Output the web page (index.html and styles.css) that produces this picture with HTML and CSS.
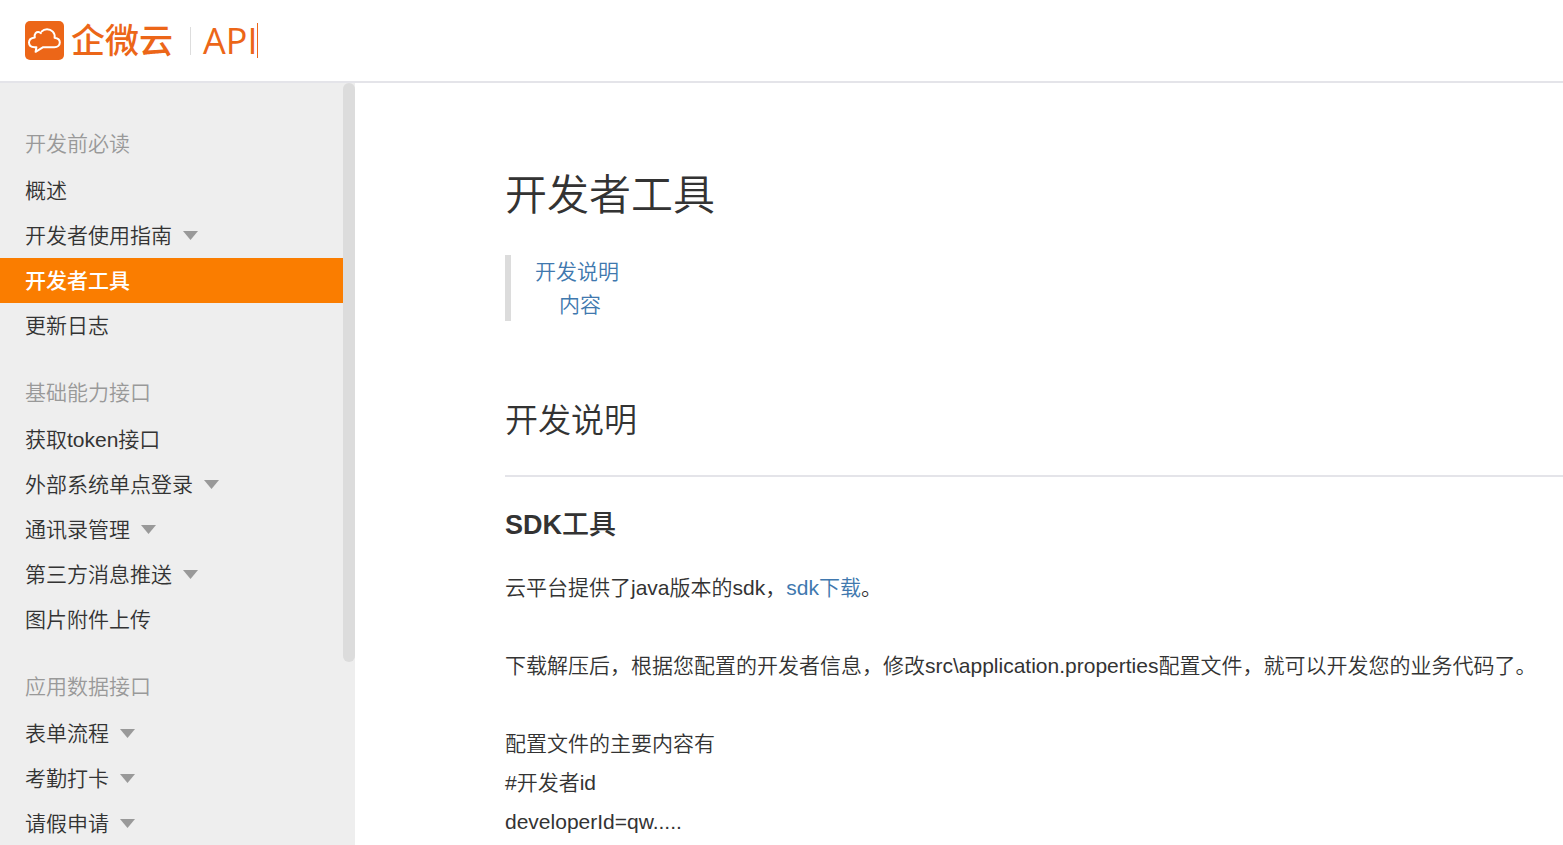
FILE: index.html
```html
<!DOCTYPE html>
<html lang="zh-CN">
<head>
    <meta charset="UTF-8">
    <meta name="viewport" content="width=device-width, initial-scale=1.0">
    <title>开发者工具</title>
    <link rel="stylesheet" href="styles.css">
</head>
<body>
    <header class="header">
        <a class="logo" href="#">
            <svg class="logo-icon" viewBox="0 0 39 39" aria-hidden="true">
                <rect width="39" height="39" rx="5" fill="#ec6618"/>
                <path d="M15.8 12.2C14.6 10.8 12 10.6 10.6 12.2C9.6 13.4 9.4 15 9.8 16.6C6.2 17 4 19 4 21.6C4 24.6 6.3 26.2 9.5 26.2H11.4L10.6 30.8L18.2 26.2H29.5C32.7 26.2 34.8 24.2 34.8 21.6C34.8 19 32.8 17.2 29.6 16.8C30.4 11.8 26.5 8.2 22 8.2C20 8.2 18 9 16.8 10.4" fill="none" stroke="#fff" stroke-width="2" stroke-linejoin="round" stroke-linecap="round"/>
            </svg>
            <span class="logo-name">企微云</span>
            <span class="logo-api">API</span>
            <span class="logo-caret"></span>
        </a>
    </header>
    <div class="container">
        <aside class="sidebar">
            <nav class="menu">
                <h5>开发前必读</h5>
                <ul>
                    <li><a href="#">概述</a></li>
                    <li><a class="more" href="#">开发者使用指南</a></li>
                    <li><a class="active" href="#">开发者工具</a></li>
                    <li><a href="#">更新日志</a></li>
                </ul>
                <h5>基础能力接口</h5>
                <ul>
                    <li><a href="#">获取token接口</a></li>
                    <li><a class="more" href="#">外部系统单点登录</a></li>
                    <li><a class="more" href="#">通讯录管理</a></li>
                    <li><a class="more" href="#">第三方消息推送</a></li>
                    <li><a href="#">图片附件上传</a></li>
                </ul>
                <h5>应用数据接口</h5>
                <ul>
                    <li><a class="more" href="#">表单流程</a></li>
                    <li><a class="more" href="#">考勤打卡</a></li>
                    <li><a class="more" href="#">请假申请</a></li>
                </ul>
            </nav>
            <div class="scrollbar"><div class="scrollbar-thumb"></div></div>
        </aside>
        <main class="content">
            <h1>开发者工具</h1>
            <ul class="toc">
                <li><a href="#intro">开发说明</a>
                    <ul>
                        <li><a href="#sdk">内容</a></li>
                    </ul>
                </li>
            </ul>
            <h2 id="intro">开发说明</h2>
            <h3 id="sdk">SDK<span class="cn">工具</span></h3>
            <p>云平台提供了java版本的sdk，<a href="#">sdk下载</a>。<br>
                <br>
                下载解压后，根据您配置的开发者信息，修改src\application.properties配置文件，就可以开发您的业务代码了。<br>
                <br>
                配置文件的主要内容有<br>
                #开发者id<br>
                developerId=qw.....
            </p>
        </main>
    </div>
</body>
</html>
```

FILE: styles.css
```css
* {
    box-sizing: border-box;
    margin: 0;
    padding: 0;
}
body {
    height: 100vh;
    display: flex;
    flex-direction: column;
    overflow: hidden;
    background: #fff;
    color: #333;
    font-family: "Liberation Sans", "Noto Sans CJK SC", sans-serif;
    font-size: 21px;
    font-weight: 350;
}
ul {
    list-style: none;
}
a {
    color: #4078ae;
    text-decoration: none;
}

.header {
    flex: none;
    padding: 21px 25px;
    border-bottom: 2px solid #e4e4e9;
}
.logo {
    display: flex;
    align-items: center;
    height: 39px;
    color: #ec6618;
}
.logo-icon {
    width: 39px;
    height: 39px;
    margin-right: 7px;
}
.logo-name {
    font-size: 34px;
    font-weight: 500;
    line-height: 39px;
    padding-top: 2px;
}
.logo-api {
    margin-left: 17px;
    padding-left: 12px;
    border-left: 1px solid #ddd;
    font-family: "Open Sans", sans-serif;
    font-size: 36px;
    font-weight: 400;
    line-height: 28px;
}
.logo-caret {
    width: 1px;
    height: 35px;
    background: #ec6618;
}

.container {
    flex: 1;
    min-height: 0;
    display: flex;
}
.sidebar {
    flex: none;
    width: 355px;
    display: flex;
    overflow: hidden;
    background: #eee;
}
.menu {
    flex: 1;
    padding-top: 36px;
}
.menu h5 {
    padding-left: 25px;
    color: #999;
    font-size: 21px;
    font-weight: 350;
    line-height: 49px;
}
.menu ul {
    margin-bottom: 20px;
}
.menu a {
    display: flex;
    align-items: center;
    padding-left: 25px;
    color: #333;
    line-height: 45px;
}
.menu .more::after {
    content: "";
    width: 15px;
    height: 9px;
    margin-left: 11px;
    background: #999;
    clip-path: polygon(0 0, 100% 0, 50% 100%);
}
.menu .active {
    background: #fa7d00;
    color: #fff;
    font-weight: 500;
}
.scrollbar {
    width: 12px;
}
.scrollbar-thumb {
    height: 76%;
    border-radius: 6px;
    background: #dcdcdc;
}

.content {
    flex: 1;
    min-width: 0;
    padding: 83px 0 0 150px;
}
.content h1 {
    font-size: 42px;
    font-weight: 350;
    line-height: 60px;
}
.toc {
    margin: 29px 0 76px;
    padding-left: 24px;
    border-left: 6px solid #dcdcdc;
    line-height: 33px;
}
.toc ul {
    padding-left: 24px;
}
.content h2 {
    padding-bottom: 30px;
    border-bottom: 2px solid #e4e4e9;
    font-size: 33px;
    font-weight: 350;
    line-height: 48px;
}
.content h3 {
    margin: 30px 0 25px;
    font-size: 27px;
    font-weight: 700;
    line-height: 36px;
}
.content h3 .cn {
    font-weight: 500;
}
.content p {
    line-height: 39px;
}
```
